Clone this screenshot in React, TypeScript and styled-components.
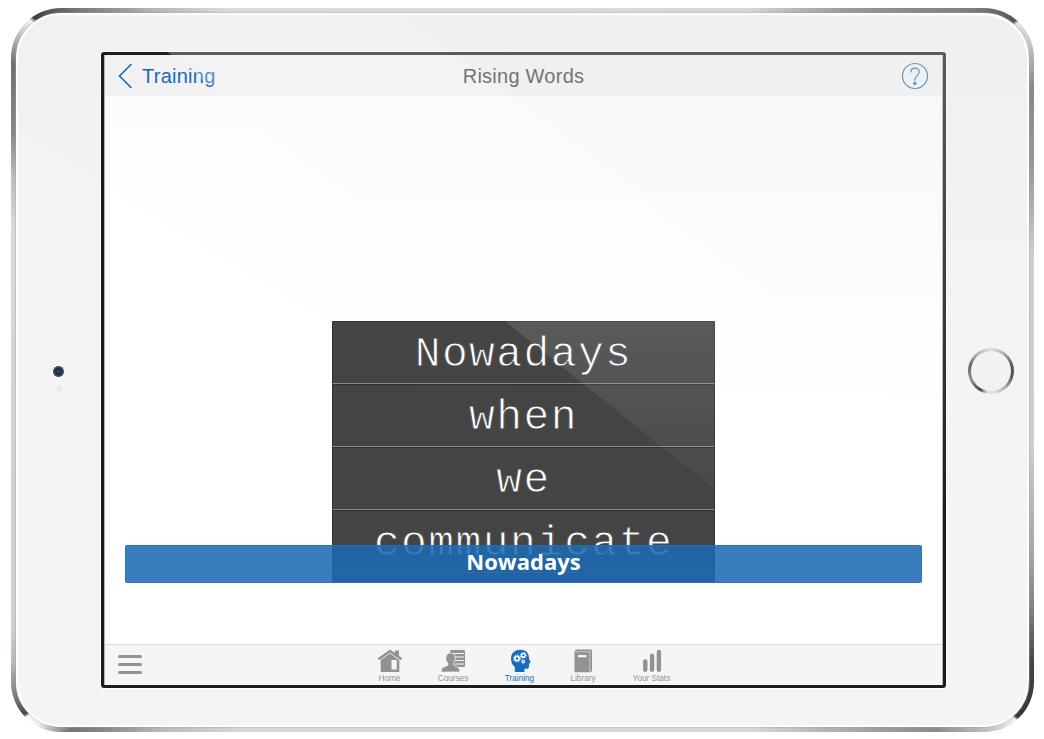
import React from "react";
import styled, { createGlobalStyle } from "styled-components";

const Global = createGlobalStyle`
  *{box-sizing:border-box}
  body{margin:0;background:#fff;font-family:"Liberation Sans",Arial,sans-serif}
`;
const Page = styled.main`width:1044px;height:739px;padding:8px 10px 7px 11px;overflow:hidden;position:relative`;
const Rim = styled.div`
  width:1023px;height:724px;padding:5px;border-radius:50px;
  background:conic-gradient(from 0deg at 511px 362px,
    #d9dcdb 0deg,#d6d8d8 32deg,#9a9a9c 42deg,#808082 51deg,#555 54.7deg,#e4e6e5 55deg,#c9cccb 57deg,#88888b 61deg,#98989b 68deg,#cdcdd0 77deg,
    #cfcfd2 98deg,#a5a5a8 110deg,#838386 115deg,#444 120deg,#333 125deg,#f1f1f1 125.3deg,#bbb 128deg,#8b8b8e 131deg,#a7a7a9 137deg,
    #d5d9d7 147deg,#d5d9d7 218deg,#bbb 225deg,#808080 230deg,#777 231.5deg,#eee 233.7deg,#fff 235deg,#444 235.3deg,#777 237deg,#b5b7b7 240deg,#cbd0d0 243deg,#d5dada 286deg,
    #bbb 291deg,#888 295deg,#707070 301deg,#bbb 303.5deg,#f5f5f5 305.4deg,#3d3d3d 305.8deg,#777 309deg,#b0b3b2 314deg,#d6dad8 320deg,#d9dcdb 360deg);
`;
const Face = styled.div`
  width:100%;height:100%;border-radius:45px;border:2px solid #fff;background:#f3f4f6;
  box-shadow:0 0 1px 1px rgba(160,160,165,.4);display:grid;grid-template-columns:83px 845px 1fr;align-items:center;
`;
const CameraSide = styled.div`display:flex;flex-direction:column;align-items:center;gap:8px;padding-top:16px;margin-left:-2px`;
const Lens = styled.i`width:13px;height:13px;border:1px solid #fff;border-radius:50%;background:radial-gradient(circle,#154a7c 0 1.5px,#152535 3px,#43474c 4px,#4c4c4f)`;
const Sensor = styled.i`width:6px;height:6px;border-radius:50%;background:#e8e8ea`;
const HomeSide = styled.div`display:flex;justify-content:center;padding:1px 0 0 8px`;
const HomeButton = styled.div`
  width:46px;height:46px;border-radius:50%;padding:3px;
  background:conic-gradient(#ddd,#aaa 35deg,#444 75deg,#444 105deg,#aaa 140deg,#ddd 170deg,#ddd 190deg,#333 210deg,#888 245deg,#555 285deg,#aaa 320deg,#ddd 360deg);
  &::after{content:"";display:block;height:100%;border-radius:50%;background:#f1f2f4}
`;
const Screen = styled.section`
  width:845px;height:636px;border:3px solid #1c1c1c;border-radius:3px;background:#fff;
  box-shadow:0 0 0 1px #fff,inset 0 0 0 1px #b5b5b6;display:flex;flex-direction:column;
`;
const Header = styled.header`
  height:41px;margin:0 1px;background:#f4f4f4;display:grid;grid-template-columns:1fr auto 1fr;align-items:center;padding:1px 13px 0;flex:none;
`;
const Back = styled.div`display:flex;align-items:center;gap:9px;color:#156ab9;font-size:20px;line-height:24px;letter-spacing:.25px`;
const Title = styled.h1`margin:0;font-size:20px;line-height:24px;font-weight:400;color:#424242;letter-spacing:.25px`;
const Help = styled.svg`justify-self:end;width:28px;height:28px`;
const Stage = styled.div`flex:1;min-height:0;padding:225px 21px 61px;display:flex;flex-direction:column;align-items:center`;
const Words = styled.div`width:383px;height:262px;overflow:hidden;border-radius:2px;flex:none`;
const Word = styled.div`
  height:63px;border:1px solid #303030;border-bottom-color:#8b8b8b;background:#444;color:#fff;
  font:43px/65px "Liberation Mono","Courier New",monospace;letter-spacing:1.4px;text-align:center;-webkit-text-stroke:.9px #484848;
`;
const Answer = styled.div`
  width:797px;height:38px;margin-top:-38px;flex:none;border:1px solid rgba(40,112,182,.7);border-radius:2px;background:rgba(28,106,178,.87);
  color:#fff;font:700 22px/31px "Open Sans","Trebuchet MS",sans-serif;text-align:center;position:relative;
`;
const Footer = styled.footer`height:41px;margin:0 1px;border-top:1px solid #dcdcdc;background:#f5f5f5;display:flex;flex:none`;
const Menu = styled.div`width:272px;padding:10px 12px 0 13px;display:flex;flex-direction:column;gap:5px`;
const Bar = styled.i`width:24px;height:3px;border-radius:2px;background:#929292`;
const Tabs = styled.nav`display:flex`;
const Tab = styled.div<{ $w: number; $active?: boolean }>`
  width:${p => p.$w}px;color:${p => (p.$active ? "#196cb9" : "#929292")};display:flex;flex-direction:column;align-items:center;
  padding-top:4px;font-size:8.2px;line-height:10px;white-space:nowrap;
  svg{width:26px;height:24px;margin-bottom:1px;flex:none}
`;
const Glare = styled.svg`position:absolute;inset:0;width:1044px;height:739px;pointer-events:none`;

const HomeIcon = () => (
  <svg viewBox="0 0 26 24" fill="currentColor"><path d="M18 1.5h4v7l-4-3z"/><path d="M13 .5.8 9.3l1.6 2L13 3.4l10.6 7.9 1.6-2z"/><path fillRule="evenodd" d="m13 4.2 9.3 7V23H3.7V11.2zM14.5 11v9.5h5.3V11z"/></svg>
);
const CoursesIcon = () => (
  <svg viewBox="0 0 26 24"><rect x="10" y="1" width="15" height="17" rx="1" fill="currentColor"/><path d="M13 4.5h11M15 8h9M15 11.5h9M15 15h9" stroke="#f5f5f5" strokeWidth="1.2"/><path d="M10.5 4c3 0 4.8 2 4.8 5 0 2-.8 4-2 5v2l4.5 2.3c1.5.8 2 2.2 2 4.7H1.2c0-3 .6-4 2.3-4.8L8 16.2v-2c-1.4-1-2.2-3-2.2-5.2 0-3 1.8-5 4.7-5z" fill="currentColor" stroke="#f5f5f5" strokeWidth=".7"/></svg>
);
const BrainIcon = () => (
  <svg viewBox="0 0 26 24"><path d="M13 .8c6 0 9 3 9 8.7l1.4 3.3c.3.8 0 1.2-1.2 1.4l-.2 3.2c0 1.8-.7 2.3-2.2 2.3h-2.3V23H7.8v-5C5.2 16 4 13 4 9.5 4 4.5 7.5.8 13 .8z" fill="currentColor"/><g fill="none" stroke="#f7f7f7"><circle cx="10" cy="9.5" r="2.2" strokeWidth="1.7"/><circle cx="10" cy="9.5" r="3.5" strokeWidth="1" strokeDasharray="1.3 1.45"/><circle cx="16.3" cy="6.3" r="1.9" strokeWidth="1.5"/><circle cx="16.3" cy="6.3" r="3" strokeWidth=".9" strokeDasharray="1.1 1.26"/><circle cx="16.2" cy="12.6" r="1.3" strokeWidth="1.2"/></g></svg>
);
const BookIcon = () => (
  <svg viewBox="0 0 26 24"><path d="M6 .5h16V22l-1.5 1.3H4.5V2z" fill="currentColor"/><path d="M5 2.7h14.8V23M19.8 2.7l1.5-1.4" fill="none" stroke="#dedede" strokeWidth=".7"/><path d="M8 6h8.5v2.3H8z" fill="#f5f5f5"/></svg>
);
const StatsIcon = () => (
  <svg viewBox="0 0 26 24" stroke="currentColor" strokeWidth="4.4" strokeLinecap="round"><path d="M6.3 12.5v8.3M13.1 7v13.8M19.9 3v17.8"/></svg>
);

const tabs = [
  { label: "Home", w: 25, icon: <HomeIcon /> },
  { label: "Courses", w: 102, icon: <CoursesIcon /> },
  { label: "Training", w: 31, icon: <BrainIcon />, active: true },
  { label: "Library", w: 96, icon: <BookIcon /> },
  { label: "Your Stats", w: 41, icon: <StatsIcon /> },
];

export default function App() {
  return (
    <Page>
      <Global />
      <Rim>
        <Face>
          <CameraSide><Lens /><Sensor /></CameraSide>
          <Screen>
            <Header>
              <Back>
                <svg width="15" height="26" viewBox="0 0 15 26"><path d="M13.5 1 1.5 13l12 12" fill="none" stroke="#156ab9" strokeWidth="1.6" /></svg>
                Training
              </Back>
              <Title>Rising Words</Title>
              <Help viewBox="0 0 28 28" fill="none" stroke="#2278c2" strokeWidth="1.2"><circle cx="14" cy="14" r="12.5" /><path d="M9.8 10.4c0-2.7 1.8-4.2 4.2-4.2s4.2 1.5 4.2 3.9c0 3.8-4.4 3.8-4.4 7.9v.8" /><circle cx="13.8" cy="21.5" r="1.1" fill="#2278c2" /></Help>
            </Header>
            <Stage>
              <Words>
                {["Nowadays", "when", "we", "communicate", ""].map((w, i) => <Word key={i}>{w}</Word>)}
              </Words>
              <Answer>Nowadays</Answer>
            </Stage>
            <Footer>
              <Menu><Bar /><Bar /><Bar /></Menu>
              <Tabs>
                {tabs.map(t => <Tab key={t.label} $w={t.w} $active={t.active}>{t.icon}{t.label}</Tab>)}
              </Tabs>
            </Footer>
          </Screen>
          <HomeSide><HomeButton /></HomeSide>
        </Face>
      </Rim>
      <Glare viewBox="0 0 1044 739">
        <defs>
          <linearGradient id="sheen" x1="0" y1="16" x2="0" y2="500" gradientUnits="userSpaceOnUse">
            <stop offset="0" stopColor="#eeeeef" stopOpacity=".32" />
            <stop offset=".15" stopColor="#f0f0f0" stopOpacity=".27" />
            <stop offset=".64" stopColor="#f5f5f5" stopOpacity=".12" />
            <stop offset="1" stopColor="#fff" stopOpacity=".02" />
          </linearGradient>
          <linearGradient id="shade" x1="0" y1="16" x2="0" y2="340" gradientUnits="userSpaceOnUse">
            <stop offset="0" stopColor="#777b80" stopOpacity=".026" />
            <stop offset="1" stopColor="#777b80" stopOpacity=".005" />
          </linearGradient>
        </defs>
        <path d="M119 16H980Q1027 18 1027 65V500H728L505 321 170 54Z" fill="url(#sheen)" />
        <path d="M18 132V65Q18 16 65 16H119L170 54 505 321V440L332 325Z" fill="url(#shade)" />
        <path d="M400 16H980Q1027 18 1027 65V400H900L545 120Z" fill="url(#shade)" />
      </Glare>
    </Page>
  );
}
